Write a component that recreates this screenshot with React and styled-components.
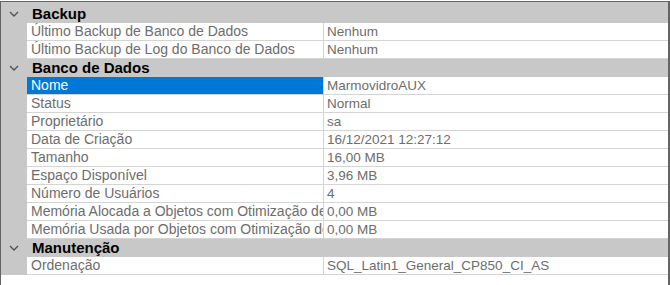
import React from "react";
import styled, { createGlobalStyle } from "styled-components";

const Global = createGlobalStyle`
  html, body { margin: 0; padding: 0; background: #ffffff; }
  body { font-family: "Liberation Sans", Arial, sans-serif; }
`;

const Frame = styled.div`
  margin-top: 1px;
  width: 670px;
  height: 284px;
  box-sizing: border-box;
  border-top: 1px solid #646464;
  border-left: 1px solid #646464;
  border-right: 2px solid #646464;
  background: #ffffff;
  overflow: hidden;
`;

const TopStrip = styled.div`
  height: 3px;
  background: #c8c8c8;
`;

const HeaderRow = styled.div`
  display: flex;
  height: 18px;
  background: #c8c8c8;
  align-items: center;
`;

const Toggle = styled.div`
  width: 26px;
  height: 18px;
  display: flex;
  align-items: center;
  justify-content: center;
  flex: none;
`;

const HeaderTitle = styled.div`
  padding-left: 5px;
  font-weight: bold;
  font-size: 15px;
  color: #000000;
  line-height: 18px;
`;

const PropRow = styled.div`
  display: flex;
  height: 18px;
`;

const Gutter = styled.div`
  width: 26px;
  flex: none;
  background: #c8c8c8;
`;

const NameCell = styled.div`
  width: 297px;
  flex: none;
  box-sizing: border-box;
  padding-left: 4px;
  height: 18px;
  line-height: 17px;
  font-size: 14px;
  white-space: nowrap;
  overflow: hidden;
  color: ${(p) => (p.$selected ? "#ffffff" : "#6d6d6d")};
  background: ${(p) => (p.$selected ? "#0078d7" : "#ffffff")};
  border-bottom: 1px solid #d4d4d4;
  border-right: 1px solid #d4d4d4;
`;

const ValueCell = styled.div`
  flex: 1;
  box-sizing: border-box;
  padding-left: 3px;
  height: 18px;
  line-height: 17px;
  font-size: 13.5px;
  white-space: nowrap;
  overflow: hidden;
  color: #6d6d6d;
  border-bottom: 1px solid #d4d4d4;
`;

const Chevron = () => (
  <svg width="10" height="6" viewBox="0 0 10 6">
    <path d="M1 1 L5 5 L9 1" fill="none" stroke="#505050" strokeWidth="1.3" />
  </svg>
);

const groups = [
  {
    title: "Backup",
    rows: [
      ["Último Backup de Banco de Dados", "Nenhum"],
      ["Último Backup de Log do Banco de Dados", "Nenhum"],
    ],
  },
  {
    title: "Banco de Dados",
    rows: [
      ["Nome", "MarmovidroAUX", true],
      ["Status", "Normal"],
      ["Proprietário", "sa"],
      ["Data de Criação", "16/12/2021 12:27:12"],
      ["Tamanho", "16,00 MB"],
      ["Espaço Disponível", "3,96 MB"],
      ["Número de Usuários", "4"],
      ["Memória Alocada a Objetos com Otimização de Memória", "0,00 MB"],
      ["Memória Usada por Objetos com Otimização de Memória", "0,00 MB"],
    ],
  },
  {
    title: "Manutenção",
    rows: [["Ordenação", "SQL_Latin1_General_CP850_CI_AS"]],
  },
];

export default function App() {
  return (
    <>
      <Global />
      <Frame>
        <TopStrip />
        {groups.map((g) => (
          <React.Fragment key={g.title}>
            <HeaderRow>
              <Toggle>
                <Chevron />
              </Toggle>
              <HeaderTitle>{g.title}</HeaderTitle>
            </HeaderRow>
            {g.rows.map(([name, value, sel]) => (
              <PropRow key={name}>
                <Gutter />
                <NameCell $selected={sel}>{name}</NameCell>
                <ValueCell>{value}</ValueCell>
              </PropRow>
            ))}
          </React.Fragment>
        ))}
      </Frame>
    </>
  );
}
